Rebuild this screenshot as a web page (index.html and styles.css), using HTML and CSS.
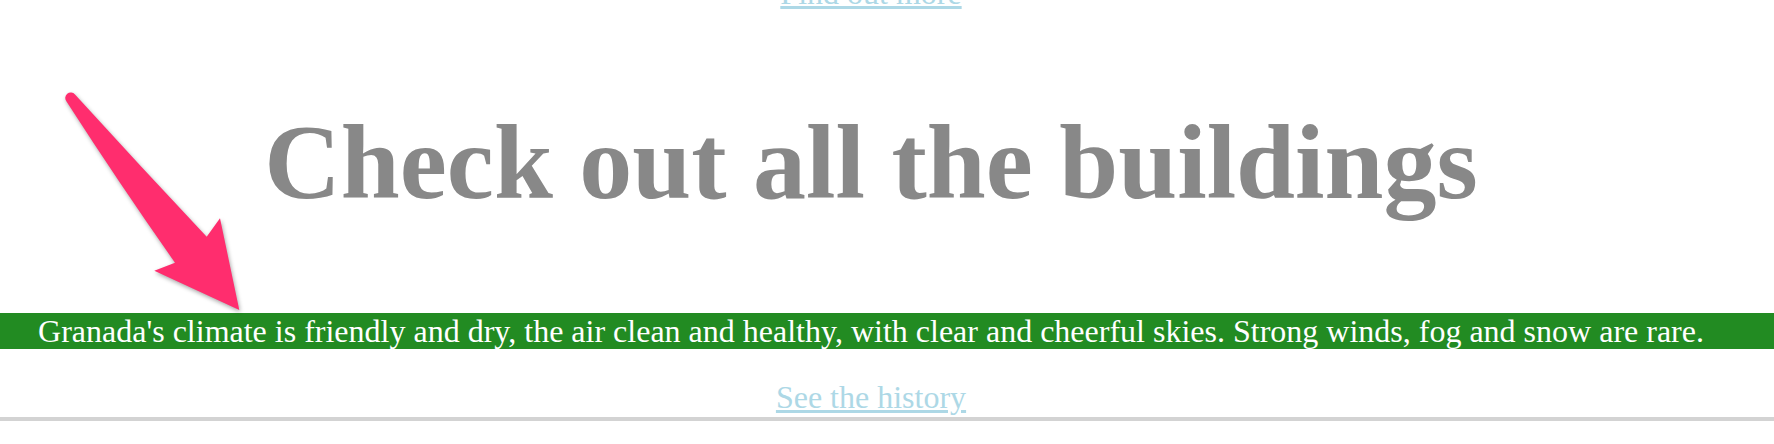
FILE: index.html
```html
<!DOCTYPE html>
<html lang="en">
<head>
<meta charset="utf-8">
<title>Granada</title>
<link rel="stylesheet" href="styles.css">
</head>
<body>
  <div class="intro">
    <a class="more-link" href="#">Find out more</a>
  </div>
  <section class="buildings">
    <h1 class="title">Check out all the buildings</h1>
    <p class="climate">Granada's climate is friendly and dry, the air clean and healthy, with clear and cheerful skies. Strong winds, fog and snow are rare.</p>
    <div class="history">
      <a class="more-link" href="#">See the history</a>
    </div>
  </section>
  <svg class="arrow" width="300" height="330" viewBox="0 0 300 330" aria-hidden="true">
    <path class="arrow-shape" d="M 66.5 101.5 A 4.6 4.6 0 0 1 75 94.5 Q 141 167 206.7 236.7 L 220 218.3 L 239.3 310 L 154.3 270.7 L 175 262.7 Q 119 183 66.5 101.5 Z"/>
  </svg>
</body>
</html>
```

FILE: styles.css
```css
html, body {
  background: #ffffff;
}

body {
  margin: 0;
  font-family: "Liberation Serif", "Times New Roman", serif;
  font-size: 32px;
}

.more-link {
  color: #add8e6;
  text-decoration: underline;
}

.intro {
  margin-top: -25px;
  padding-right: 32px;
  text-align: center;
}

.title {
  margin: 90px 0 0;
  padding-right: 32px;
  font-size: 106px;
  font-weight: bold;
  color: #888888;
  text-align: center;
  line-height: normal;
}

.climate {
  margin: 89px 0 0;
  padding-right: 32px;
  background: #228b22;
  color: #ffffff;
  line-height: 36px;
  text-align: center;
}

.history {
  margin-top: 30px;
  padding: 0 32px 1px 0;
  text-align: center;
  border-bottom: 4px solid #d3d3d3;
}

.arrow {
  position: absolute;
  left: 0;
  top: 0;
  overflow: visible;
  filter: drop-shadow(1px 2px 2px rgba(0, 0, 0, 0.35));
}

.arrow-shape {
  fill: #ff2d6e;
}
```
